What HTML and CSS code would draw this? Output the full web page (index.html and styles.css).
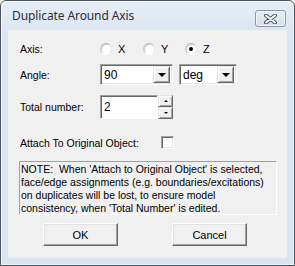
FILE: index.html
```html
<!DOCTYPE html>
<html>
<head>
<meta charset="utf-8">
<link rel="stylesheet" href="styles.css">
</head>
<body>
<div class="window">
  <div class="titlebar">
    <span class="title">Duplicate Around Axis</span>
    <span class="close">
      <svg width="15" height="10" viewBox="0 0 15 10">
        <path d="M3 1.5 L12 8.5 M12 1.5 L3 8.5" stroke="#4a5262" stroke-width="4" stroke-linecap="round"/>
        <path d="M3 1.5 L12 8.5 M12 1.5 L3 8.5" stroke="#ffffff" stroke-width="2" stroke-linecap="round"/>
      </svg>
    </span>
  </div>
  <div class="client">
    <div class="row axis-row">
      <span class="label">Axis:</span>
      <div class="radios">
        <span class="radio-item"><span class="radio"></span><span>X</span></span>
        <span class="radio-item"><span class="radio"></span><span>Y</span></span>
        <span class="radio-item"><span class="radio checked"></span><span>Z</span></span>
      </div>
    </div>
    <div class="row angle-row">
      <span class="label">Angle:</span>
      <div class="combo combo-angle"><span class="val">90</span><span class="drop"><span class="arrow"></span></span></div>
      <div class="combo combo-unit"><span class="val">deg</span><span class="drop"><span class="arrow"></span></span></div>
    </div>
    <div class="row total-row">
      <span class="label">Total number:</span>
      <div class="edit"><span class="val">2</span></div>
      <div class="spin">
        <span class="spin-btn"><span class="tri-up"></span></span>
        <span class="spin-btn"><span class="tri-down"></span></span>
      </div>
    </div>
    <div class="row attach-row">
      <span class="label attach-label">Attach To Original Object:</span>
      <span class="check"></span>
    </div>
    <div class="note">NOTE:&nbsp; When 'Attach to Original Object' is selected,<br>face/edge assignments (e.g. boundaries/excitations)<br>on duplicates will be lost, to ensure model<br>consistency, when 'Total Number' is edited.</div>
    <div class="buttons">
      <button class="btn">OK</button>
      <button class="btn">Cancel</button>
    </div>
  </div>
</div>
</body>
</html>
```
FILE: styles.css
```css
html, body {
  margin: 0;
  padding: 0;
  background: #ffffff;
}
.window {
  width: 295px;
  height: 266px;
  box-sizing: border-box;
  border: 1px solid #50555c;
  border-radius: 6px 6px 0 0;
  background: linear-gradient(#e6edf6, #d9e5f3 40px, #d9e5f3);
  box-shadow: inset 1px 1px 0 #f4f7fb, inset -1px -1px 0 #eef3f9;
  display: flex;
  flex-direction: column;
  font-family: "Liberation Sans", Arial, sans-serif;
  font-size: 10.5px;
  color: #000;
}
.titlebar {
  height: 29px;
  display: flex;
  align-items: flex-start;
  justify-content: space-between;
  padding: 0 8px 0 11px;
}
.title {
  font-family: "Noto Sans", "Open Sans", sans-serif;
  font-size: 12px;
  color: #2c2f33;
  margin-top: 6px;
  letter-spacing: -0.1px;
}
.close {
  margin-top: 9px;
  width: 29px;
  height: 15px;
  border: 1px solid #8b97a9;
  border-radius: 3px;
  background: linear-gradient(#e9eef5, #d4deea);
  box-shadow: inset 0 0 0 1px #f2f5f9;
  display: flex;
  align-items: center;
  justify-content: center;
}
.client {
  margin: 0 7px 7px 7px;
  flex: 1;
  background: #f0f0f0;
  padding-left: 12px;
  display: flex;
  flex-direction: column;
}
.row {
  display: flex;
  align-items: center;
}
.label {
  width: 80px;
  flex: none;
}
.axis-row {
  margin-top: 12px;
  height: 13px;
}
.radios {
  display: flex;
}
.radio-item {
  display: flex;
  align-items: center;
  gap: 6px;
  font-size: 11px;
}
.radio-item:nth-child(1) { width: 43px; }
.radio-item:nth-child(2) { width: 42px; }
.radio {
  width: 12px;
  height: 12px;
  box-sizing: border-box;
  border-radius: 50%;
  border: 1px solid;
  border-color: #b4b4b4 #e8e8e8 #ffffff #c8c8c8;
  background: #ffffff;
  box-shadow: inset 1px 1px 0 #d0d0d0;
  position: relative;
}
.radio.checked::after {
  content: "";
  position: absolute;
  left: 3px;
  top: 3px;
  width: 4px;
  height: 4px;
  border-radius: 50%;
  background: #000;
}
.angle-row {
  margin-top: 9px;
  height: 21px;
}
.combo {
  height: 21px;
  box-sizing: border-box;
  border: 1px solid;
  border-color: #a0a0a0 #ffffff #ffffff #a0a0a0;
  box-shadow: inset 1px 1px 0 #696969, inset -1px -1px 0 #e3e3e3;
  background: #ffffff;
  display: flex;
  align-items: center;
  justify-content: space-between;
  padding: 2px;
}
.combo .val {
  padding-left: 1px;
  font-size: 12px;
}
.combo-angle { width: 73px; }
.combo-unit { width: 58px; margin-left: 6px; }
.drop {
  width: 17px;
  height: 17px;
  box-sizing: border-box;
  background: #f0f0f0;
  border: 1px solid;
  border-color: #e3e3e3 #696969 #696969 #e3e3e3;
  box-shadow: inset 1px 1px 0 #ffffff, inset -1px -1px 0 #a0a0a0;
  display: flex;
  align-items: center;
  justify-content: center;
}
.arrow {
  width: 0;
  height: 0;
  border-left: 4px solid transparent;
  border-right: 4px solid transparent;
  border-top: 4px solid #000;
  margin-top: 1px;
}
.total-row {
  margin-top: 10px;
  height: 24px;
}
.edit {
  width: 58px;
  height: 24px;
  box-sizing: border-box;
  border: 1px solid;
  border-color: #a0a0a0 #ffffff #ffffff #a0a0a0;
  box-shadow: inset 1px 1px 0 #696969;
  background: #fff;
  display: flex;
  align-items: center;
  padding-left: 3px;
  font-size: 12px;
}
.spin {
  display: flex;
  flex-direction: column;
  width: 15px;
  height: 24px;
}
.spin-btn {
  flex: 1;
  box-sizing: border-box;
  background: #f0f0f0;
  border: 1px solid;
  border-color: #e3e3e3 #696969 #696969 #e3e3e3;
  box-shadow: inset 1px 1px 0 #ffffff, inset -1px -1px 0 #a0a0a0;
  display: flex;
  align-items: center;
  justify-content: center;
}
.tri-up {
  width: 0; height: 0;
  border-left: 2px solid transparent;
  border-right: 2px solid transparent;
  border-bottom: 2px solid #000;
}
.tri-down {
  width: 0; height: 0;
  border-left: 2px solid transparent;
  border-right: 2px solid transparent;
  border-top: 2px solid #000;
}
.attach-row {
  margin-top: 17px;
  height: 13px;
}
.attach-label {
  width: 141px;
}
.check {
  width: 13px;
  height: 13px;
  box-sizing: border-box;
  border: 1px solid;
  border-color: #a0a0a0 #ffffff #ffffff #a0a0a0;
  box-shadow: inset 1px 1px 0 #696969, inset -1px -1px 0 #e3e3e3;
  background: #fff;
}
.note {
  margin-top: 12px;
  margin-left: -1px;
  width: 258px;
  height: 54px;
  box-sizing: border-box;
  border: 1px solid;
  border-color: #a0a0a0 #ffffff #ffffff #a0a0a0;
  padding: 1px 1px 0 1px;
  line-height: 13px;
  white-space: nowrap;
  overflow: hidden;
}
.buttons {
  display: flex;
  margin-top: 8px;
  padding-left: 23px;
  gap: 54px;
}
.btn {
  width: 75px;
  height: 23px;
  box-sizing: border-box;
  font-family: "Liberation Sans", Arial, sans-serif;
  font-size: 11px;
  color: #000;
  background: #f0f0f0;
  border: 1px solid;
  border-color: #ffffff #696969 #696969 #ffffff;
  box-shadow: inset -1px -1px 0 #a0a0a0, inset 1px 1px 0 #e3e3e3;
  padding: 0;
  margin: 0;
}
```
